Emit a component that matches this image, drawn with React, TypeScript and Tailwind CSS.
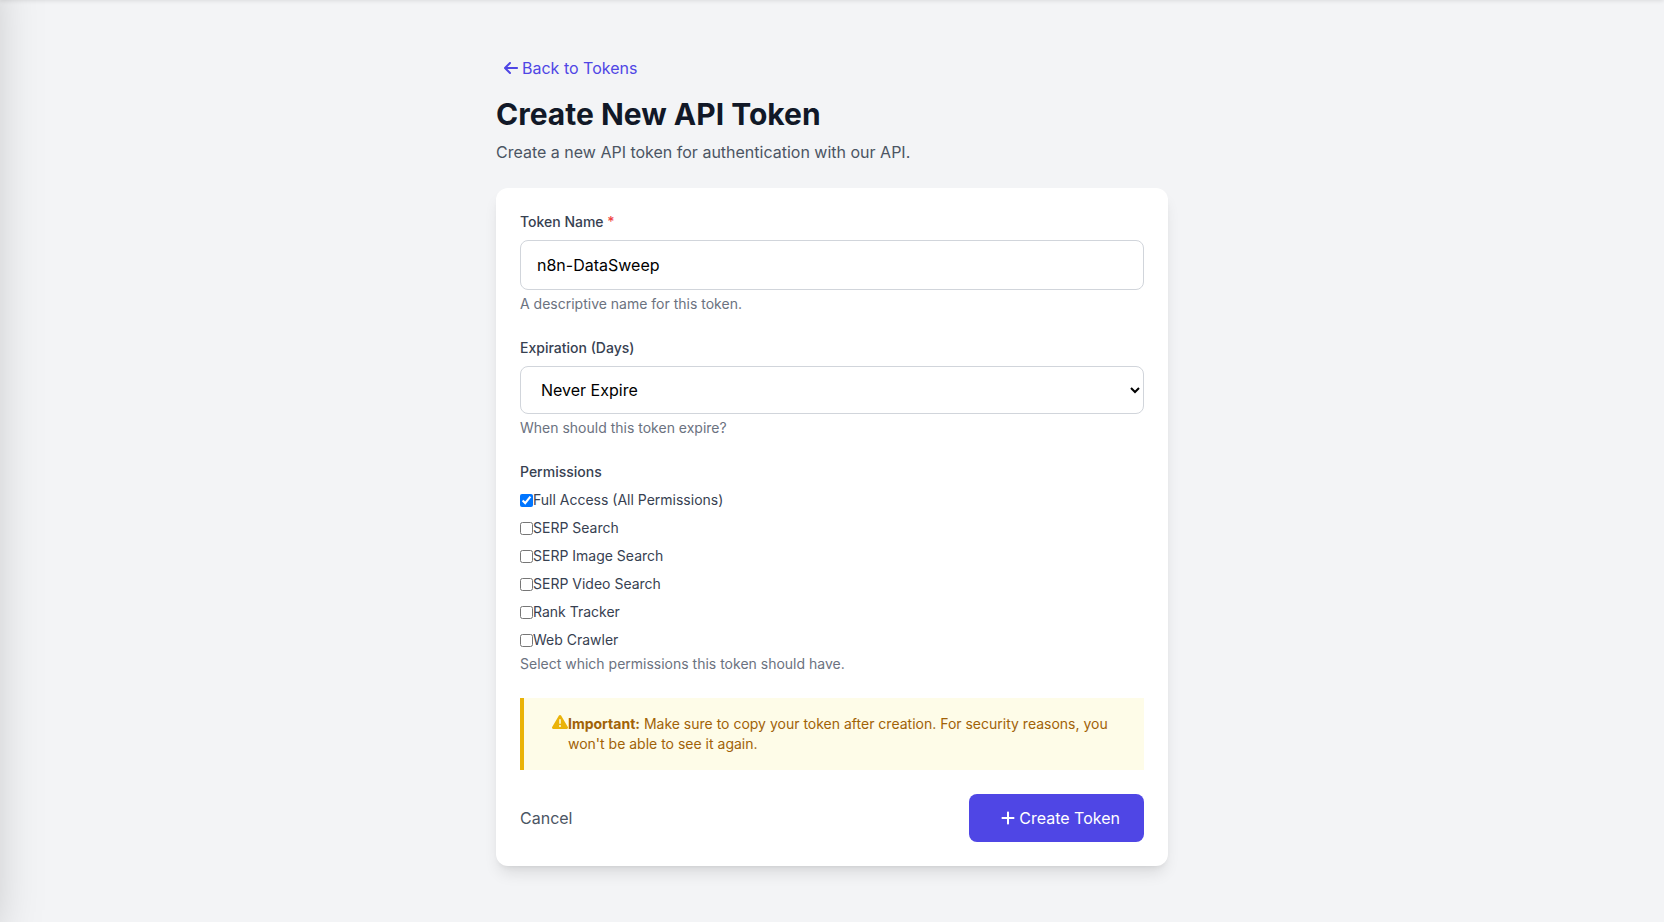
import { useState } from "react"

import { FaArrowLeft, FaPlus, FaTriangleExclamation } from "react-icons/fa6"

const permissionList = [
  { id: "all", label: "Full Access (All Permissions)" },
  { id: "serp", label: "SERP Search" },
  { id: "serp-image", label: "SERP Image Search" },
  { id: "serp-video", label: "SERP Video Search" },
  { id: "rank", label: "Rank Tracker" },
  { id: "crawler", label: "Web Crawler" },
]

const App = () => {
  const [name, setName] = useState("n8n-DataSweep")
  const [expiration, setExpiration] = useState("never")
  const [permissions, setPermissions] = useState(["all"])

  const togglePermission = (id: string) => {
    setPermissions((prev) =>
      prev.includes(id) ? prev.filter((p) => p !== id) : [...prev, id],
    )
  }

  return (
    <div className="relative min-h-screen overflow-hidden bg-[#f3f4f6] font-['Inter',sans-serif]">
      {/* closed sidebar and collapsed top bar, only their shadows reach the page */}
      <aside className="absolute -top-16 bottom-0 left-0 w-64 -translate-x-full shadow-[0_25px_50px_-12px_rgba(0,0,0,0.25)]" />
      <header className="absolute inset-x-0 top-0 h-16 -translate-y-full shadow-[0_1px_4px_0_rgba(0,0,0,0.1)]" />

      <main className="mx-auto max-w-2xl py-14">
        <a
          href="#tokens"
          className="mb-4 flex w-fit items-center gap-1 pl-2 text-[#4f46e5] hover:text-[#3730a3]">
          <FaArrowLeft className="h-4 w-[14px]" />
          Back to Tokens
        </a>
        <h1 className="text-3xl font-bold text-[#111827]">Create New API Token</h1>
        <p className="mt-2 text-[#4b5563]">
          Create a new API token for authentication with our API.
        </p>

        <form
          className="mt-6 rounded-xl bg-white p-6 shadow-lg"
          onSubmit={(e) => e.preventDefault()}>
          <div className="mb-6">
            <label
              htmlFor="name"
              className="mb-2 block text-sm font-medium text-[#374151]">
              Token Name <span className="text-[#ef4444]">*</span>
            </label>
            <input
              id="name"
              type="text"
              required
              value={name}
              onChange={(e) => setName(e.target.value)}
              className="block w-full rounded-lg border border-[#d1d5db] px-4 py-3 text-black"
            />
            <p className="mt-1 text-sm text-[#6b7280]">
              A descriptive name for this token.
            </p>
          </div>

          <div className="mb-6">
            <label
              htmlFor="expiration"
              className="mb-2 block text-sm font-medium text-[#374151]">
              Expiration (Days)
            </label>
            <select
              id="expiration"
              value={expiration}
              onChange={(e) => setExpiration(e.target.value)}
              className="block h-12 w-full rounded-lg border border-[#d1d5db] bg-white px-4 text-black">
              <option value="never">Never Expire</option>
              <option value="30">30 Days</option>
              <option value="90">90 Days</option>
              <option value="365">365 Days</option>
            </select>
            <p className="mt-1 text-sm text-[#6b7280]">
              When should this token expire?
            </p>
          </div>

          <fieldset className="mb-6">
            <legend className="mb-2 block text-sm font-medium text-[#374151]">
              Permissions
            </legend>
            <div className="space-y-2">
              {permissionList.map((item) => (
                <div key={item.id} className="flex items-center">
                  <input
                    id={item.id}
                    type="checkbox"
                    checked={permissions.includes(item.id)}
                    onChange={() => togglePermission(item.id)}
                  />
                  <label htmlFor={item.id} className="text-sm text-[#374151]">
                    {item.label}
                  </label>
                </div>
              ))}
            </div>
            <p className="mt-1 text-sm text-[#6b7280]">
              Select which permissions this token should have.
            </p>
          </fieldset>

          <div className="mb-6 flex border-l-4 border-[#eab308] bg-[#fefce8] py-4 pr-4 pl-7">
            <FaTriangleExclamation className="h-4 w-4 shrink-0 text-[#eab308]" />
            <p className="text-sm text-[#a16207]">
              <strong className="font-bold">Important:</strong> Make sure to copy your
              token after creation. For security reasons, you won't be able to see it
              again.
            </p>
          </div>

          <div className="flex items-center justify-between">
            <a href="#tokens" className="text-[#4b5563] hover:text-[#1f2937]">
              Cancel
            </a>
            <button
              type="submit"
              className="flex items-center gap-1 rounded-lg bg-[#4f46e5] py-3 pr-6 pl-8 text-white hover:bg-[#4338ca]">
              <FaPlus className="h-4 w-[14px]" />
              Create Token
            </button>
          </div>
        </form>
      </main>
    </div>
  )
}

export default App
